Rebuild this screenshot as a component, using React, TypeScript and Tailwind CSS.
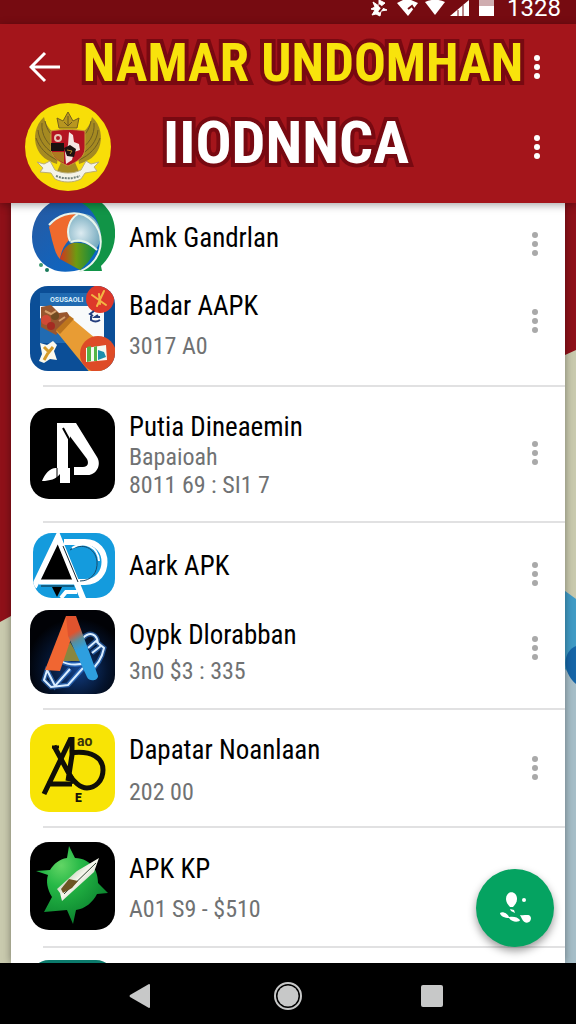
import React from "react";

interface AppItem {
  name: string;
  lines: string[];
  icon: React.ReactNode;
  row: string;
  body?: string;
  menu?: string;
  divider?: boolean;
}

const MoreButton: React.FC<{ label: string; className?: string }> = ({
  label,
  className = ""
}) => (
  <button
    type="button"
    aria-label={label}
    className={`flex w-6 shrink-0 justify-center py-2 ${className}`}
  >
    <svg viewBox="0 0 8 26" className="h-[26px] w-2" fill="currentColor">
      <circle cx="4" cy="4" r="3" />
      <circle cx="4" cy="13" r="3" />
      <circle cx="4" cy="22" r="3" />
    </svg>
  </button>
);

const Emblem = () => (
  <svg viewBox="0 0 86 90" className="h-[90px] w-[86px] shrink-0">
    <ellipse cx="43" cy="45" rx="43" ry="44" fill="#f8de08" />
    {/* wings */}
    <g>
      <path d="M19 15c-9 8-11 21-7 31 3 8 10 13 20 16l4-28c-9-3-15-9-17-19z" fill="#a58a21" />
      <path d="M17 21c-1 12 5 22 17 28M13 28c1 11 8 20 20 26M11 36c3 9 10 17 21 22M20 19c2 10 7 16 15 20" stroke="#715e20" strokeWidth="1" fill="none" />
    </g>
    <g transform="matrix(-1 0 0 1 86 0)">
      <path d="M19 15c-9 8-11 21-7 31 3 8 10 13 20 16l4-28c-9-3-15-9-17-19z" fill="#a58a21" />
      <path d="M17 21c-1 12 5 22 17 28M13 28c1 11 8 20 20 26M11 36c3 9 10 17 21 22M20 19c2 10 7 16 15 20" stroke="#715e20" strokeWidth="1" fill="none" />
    </g>
    <path d="M34 26l-2-10 6 3 5-9 5 9 6-3-2 10z" fill="#b89620" stroke="#75601c" strokeWidth="1" />
    <path d="M39 20l4 4 4-4M43 14v9" stroke="#6b571c" fill="none" />
    <path d="M37 58l-6 14h24l-6-14z" fill="#a78b22" />
    {/* shield */}
    <path d="M26 29c10-2 24-2 34 0v17c0 9-8 14-17 18-9-4-17-9-17-18z" fill="#b31422" stroke="#c69a38" strokeWidth="1" />
    <path d="M26 41h13v8H26z" fill="#19110f" />
    <path d="M27 50h12v11c-7-3-11-7-12-11z" fill="#ad7a20" />
    <circle cx="33" cy="36" r="3" fill="none" stroke="#e7c5b5" strokeWidth="2" />
    <path d="M44 30l4 3 1 7 5 2 1 6-6 2-2 8-6 4-1-12 3-7z" fill="#f5e5e2" />
    <path d="M39 46l6-3 6 4-2 8-7-1z" fill="#1d1111" />
    <path d="M42 48l5 1-2 3" stroke="#b7892a" fill="none" />
    {/* ribbon */}
    <path d="M12 60l7 2 6-3 5 9c8 4 18 4 26 0l5-9 5 3 8-2-5 5 3 4-12 2-4 6c-8 4-18 4-26 0l-4-6-11-1 3-4z" fill="#f4f3e8" stroke="#b9ad79" strokeWidth="1" />
    <path d="M31 74c8 3 16 3 24 0" stroke="#72817b" strokeWidth="2" strokeDasharray="2 1" fill="none" />
  </svg>
);

const GlobeIcon = () => (
  <svg viewBox="0 0 85 69" className="h-[69px] w-[85px] shrink-0">
    <defs>
      <linearGradient id="globeBlue" x1="0" y1="0" x2="1" y2="1">
        <stop offset="0" stopColor="#285aa1" />
        <stop offset="1" stopColor="#0668ca" />
      </linearGradient>
      <radialGradient id="globeWhite" cx="0.4" cy="0.55" r="0.6">
        <stop offset="0" stopColor="#dcebf1" />
        <stop offset="1" stopColor="#76abbf" />
      </radialGradient>
      <linearGradient id="globeFan" x1="0" y1="0.5" x2="1" y2="0.5">
        <stop offset="0" stopColor="#d5321d" />
        <stop offset="0.45" stopColor="#6d9b12" />
        <stop offset="1" stopColor="#078848" />
      </linearGradient>
    </defs>
    <path d="M45 0h27c9 8 14 19 13 34-1 14-8 23-14 29l1 5H50z" fill="#119447" />
    <path d="M20 0C8 8 2 20 2 34c0 15 8 27 20 32 7 4 21 3 31 0 11-6 18-18 18-31C70 20 64 7 52 0z" fill="url(#globeBlue)" />
    <path d="M19 24c7-9 16-14 27-13-5 6-8 14-7 26-5 5-8 12-9 19-5-5-6-13-8-19z" fill="#ef6a2d" />
    <path d="M40 18c8-11 22-9 28 3 4 8 4 17-2 25-8-7-16-8-26-6-3-9-3-16 0-22z" fill="url(#globeWhite)" />
    <path d="M30 56c3-11 9-18 19-16 7 0 12 3 17 7-4 8-9 14-16 20z" fill="url(#globeFan)" />
    <path d="M19 22c8-9 22-15 35-10 14 7 20 22 15 37-3 9-11 16-20 20M41 39c9-4 17 0 26 8M40 38c-4-9-2-21 8-27" fill="none" stroke="#e8f4ec" strokeWidth="2" />
    <circle cx="11" cy="62" r="2" fill="#3e9970" />
    <circle cx="17" cy="67" r="2" fill="#197a5a" />
  </svg>
);

const BadarIcon = () => (
  <svg viewBox="0 0 85 85" className="h-[85px] w-[85px] shrink-0">
    <defs>
      <clipPath id="badarClip">
        <rect width="85" height="85" rx="18" />
      </clipPath>
    </defs>
    <g clipPath="url(#badarClip)">
      <path d="M0 0h85v85H0z" fill="#0b4e97" />
      <path d="M10 7h64v50H10z" fill="#216bb2" />
      <path d="M10 20h64v34H49L10 32z" fill="#f8fafb" />
      <text x="20" y="16" fontSize="7" fontWeight="700" fontFamily="Roboto, sans-serif" fill="#d9eefb">OSUSAOLI</text>
      <path d="M11 21l10-2 8 8 8-1 4 6-15 17-15-8z" fill="#98562f" />
      <circle cx="16" cy="34" r="5" fill="#d14936" />
      <circle cx="25" cy="30" r="4" fill="#704b22" />
      <circle cx="21" cy="40" r="4" fill="#a42b22" />
      <path d="M15 25l6 3 5-3M29 35l6-4" stroke="#d5a06c" strokeWidth="2" fill="none" />
      <path d="M26 45l14-14 44 37-12 20H61z" fill="#e89c34" />
      <path d="M26 44l14-14 4 3-14 15z" fill="#bd751d" />
      <circle cx="70" cy="13" r="14" fill="#dd382a" />
      <path d="M62 9l14 10M74 5l-7 15M69 8l1 10" stroke="#f3b644" strokeWidth="2" strokeLinecap="round" />
      <path d="M64 25l-4 3 3 2M61 30v4c3 2 6 2 9 0M68 29l-3 2h5" stroke="#243e7e" strokeWidth="2" fill="none" />
      <circle cx="68" cy="68" r="18" fill="#de4b27" />
      <path d="M56 62l20-3 1 15-21 2z" fill="#f5faf2" />
      <path d="M57 61l4-1v15l-4 1zM64 61l3-1v15h-3z" fill="#54b545" />
      <path d="M68 64l6 2 2 5-8 3z" fill="#1b8eae" />
      <path d="M10 57l7 2 6-4 4 4-3 6 3 9-7-1-6 4-5-2 3-7z" fill="#fbf9ed" />
      <path d="M14 61l5 5 4-5M18 67l-4 7" stroke="#d49a28" strokeWidth="3" fill="none" />
    </g>
  </svg>
);

const PutiaIcon = () => (
  <svg viewBox="0 0 85 91" className="h-[91px] w-[85px] shrink-0">
    <rect width="85" height="91" rx="19" fill="#000" />
    <path d="M27 15h13v60H30V66c-4 5-10 7-18 7 3-8 9-14 15-13z" fill="#fff" />
    <path d="M34 15h12l21 34c5 8-1 18-9 18H44v-8h9c5 0 6-4 4-8L33 19z" fill="#fff" />
    <path d="M33 20l6 11v29" stroke="#000" strokeWidth="2" fill="none" />
    <path d="M27 60v12" stroke="#000" strokeWidth="1" />
  </svg>
);

const AarkIcon = () => (
  <svg viewBox="0 0 85 65" className="h-[65px] w-[85px] shrink-0">
    <defs>
      <clipPath id="aarkClip">
        <rect x="3" width="82" height="65" rx="19" />
      </clipPath>
    </defs>
    <g clipPath="url(#aarkClip)">
      <path d="M0 0h85v65H0z" fill="#149bdd" />
      <path d="M34 9h21c26 0 26 40 0 40h-9" fill="none" stroke="#fff" strokeWidth="6" />
      <path d="M40 17c13-8 25-2 27 11 1 12-6 20-17 20" fill="none" stroke="#17496b" strokeWidth="1" />
      <path d="M42 15c13-8 26-1 27 13" fill="none" stroke="#fff" strokeWidth="2" />
      <path d="M27 8l20 42H9z" fill="#000" />
      <path d="M4 54L28 4l26 64" fill="none" stroke="#fff" strokeWidth="6" />
      <path d="M9 49h35" stroke="#fff" strokeWidth="5" />
      <path d="M11 53h33M33 13l15 36" stroke="#102632" strokeWidth="1" />
      <path d="M22 54h10l-5 10z" fill="#000" />
      <path d="M31 65l5-6h11" stroke="#fff" strokeWidth="4" fill="none" />
    </g>
  </svg>
);

const OypkIcon = () => (
  <svg viewBox="0 0 85 84" className="h-[84px] w-[85px] shrink-0">
    <defs>
      <radialGradient id="oypkBg" cx="0.55" cy="0.7" r="0.6">
        <stop offset="0" stopColor="#123f86" />
        <stop offset="0.6" stopColor="#04142f" />
        <stop offset="1" stopColor="#010206" />
      </radialGradient>
      <linearGradient id="oypkLeg" x1="0" y1="0" x2="0.3" y2="1">
        <stop offset="0.3" stopColor="#e0532e" />
        <stop offset="0.45" stopColor="#578f9e" />
        <stop offset="0.6" stopColor="#2e9fdf" />
      </linearGradient>
    </defs>
    <rect width="85" height="84" rx="19" fill="url(#oypkBg)" />
    <path d="M53 28c7-7 14-4 15 5l6 5c-2 10-7 18-15 24M58 38l8-7 5 5-9 7M18 57l-4 13 7 7 17-2 15-17M17 60l8 16 15-17M31 51c8 5 20 4 29 1" fill="none" stroke="#3c8cf0" strokeWidth="5" opacity="0.5" />
    <path d="M53 28c7-7 14-4 15 5l6 5c-2 10-7 18-15 24M58 38l8-7 5 5-9 7M18 57l-4 13 7 7 17-2 15-17M17 60l8 16 15-17M31 51c8 5 20 4 29 1" fill="none" stroke="#d9edff" strokeWidth="2" />
    <path d="M40 32l11 19H30z" fill="#89863f" />
    <path d="M36 6h9l-2 17-13 38-15-1z" fill="#f06632" />
    <path d="M36 6h10l22 60c0 5-9 6-11 1L38 26z" fill="url(#oypkLeg)" />
  </svg>
);

const DapatarIcon = () => (
  <svg viewBox="0 0 85 88" className="h-[88px] w-[85px] shrink-0">
    <rect width="85" height="88" rx="19" fill="#f8e405" />
    <g fill="none" stroke="#100f07">
      <path d="M41 14L14 70M17 60h25" strokeWidth="5" />
      <path d="M42 13v18l-4 26M24 22l20 37" strokeWidth="5" />
      <path d="M40 29c22-3 33 5 33 17 0 11-8 18-16 18-7 0-14-7-18-14" strokeWidth="5" />
      <path d="M22 23h7" strokeWidth="3" />
    </g>
    <text x="47" y="22" fontSize="14" fontWeight="700" fontFamily="Roboto, sans-serif" fill="#39340b">ao</text>
    <text x="45" y="78" fontSize="12" fontWeight="900" fontFamily="Roboto, sans-serif" fill="#171607">E</text>
  </svg>
);

const BallIcon = () => (
  <svg viewBox="0 0 85 88" className="h-[88px] w-[85px] shrink-0">
    <defs>
      <radialGradient id="ballGreen" cx="0.35" cy="0.25" r="0.8">
        <stop offset="0" stopColor="#62d565" />
        <stop offset="0.35" stopColor="#25b846" />
        <stop offset="1" stopColor="#087d2b" />
      </radialGradient>
      <linearGradient id="blade" x1="0" y1="0" x2="1" y2="1">
        <stop offset="0" stopColor="#73966f" />
        <stop offset="0.5" stopColor="#f7f8ed" />
        <stop offset="1" stopColor="#899488" />
      </linearGradient>
    </defs>
    <rect width="85" height="88" rx="19" fill="#000" />
    <path d="M37 16l2-12 6 12c8 0 15 4 19 10 3 4 4 11 4 15l10 10-11 1c-4 8-12 15-21 16l-3 14-6-14-23 2 8-15c-5-8-6-16-4-22L6 29l14-1c4-6 9-11 17-12z" fill="url(#ballGreen)" />
    <path d="M69 16l-5 14-32 29-2-8-3-4 20-18z" fill="url(#blade)" />
    <path d="M66 21L34 52" stroke="#304432" strokeWidth="1" />
    <path d="M31 47l8-10 9 2-6 7-9 5z" fill="#6c5423" />
  </svg>
);

const TealIcon = () => (
  <svg viewBox="0 0 85 86" className="h-[86px] w-[85px] shrink-0">
    <rect width="85" height="86" rx="19" fill="#0b7a6b" />
  </svg>
);

const apps: AppItem[] = [
  { name: "Amk Gandrlan", lines: [], icon: <GlobeIcon />, row: "pb-2", menu: "mt-3" },
  {
    name: "Badar AAPK",
    lines: ["3017 A0"],
    icon: <BadarIcon />,
    row: "pt-1.5 pb-3.5",
    body: "gap-2.5 pb-2",
    menu: "mb-4",
    divider: true
  },
  {
    name: "Putia Dineaemin",
    lines: ["Bapaioah", "8011 69 : SI1 7"],
    icon: <PutiaIcon />,
    row: "pt-5 pb-5.5",
    body: "pt-1",
    divider: true
  },
  { name: "Aark APK", lines: [], icon: <AarkIcon />, row: "pt-2.5 pb-1.5", menu: "mt-4" },
  {
    name: "Oypk Dlorabban",
    lines: ["3n0 $3 : 335"],
    icon: <OypkIcon />,
    row: "pt-1.5 pb-3.5",
    body: "gap-1.5",
    menu: "mb-2",
    divider: true
  },
  {
    name: "Dapatar Noanlaan",
    lines: ["202 00"],
    icon: <DapatarIcon />,
    row: "pt-3.5 pb-3.5",
    body: "gap-3 pt-1",
    divider: true
  },
  {
    name: "APK KP",
    lines: ["A01 S9 - $510"],
    icon: <BallIcon />,
    row: "pt-3.5 pb-4",
    body: "gap-2.5 pt-1",
    divider: true
  },
  { name: "", lines: [], icon: <TealIcon />, row: "pt-3" }
];

const AppRow: React.FC<{ item: AppItem }> = ({ item }) => (
  <li>
    <div className={`flex items-center pr-[18px] pl-[19px] ${item.row}`}>
      {item.icon}
      <div className={`ml-3.5 flex min-w-0 flex-1 flex-col ${item.body ?? ""}`}>
        {item.name && (
          <h2 className="truncate text-[27px] leading-8 text-black">{item.name}</h2>
        )}
        {item.lines.map((line) => (
          <p key={line} className="truncate text-[24px] leading-7 text-[#707273]">
            {line}
          </p>
        ))}
      </div>
      {item.name && item.name !== "APK KP" && (
        <MoreButton
          label={`More options for ${item.name}`}
          className={`text-[#a9a9a9] ${item.menu ?? ""}`}
        />
      )}
    </div>
    {item.divider && <div className="ml-8 h-0.5 bg-[#e1e1e2]" />}
  </li>
);

const StatusBar = () => (
  <div className="flex h-6 shrink-0 items-end justify-end bg-[#760b11] pr-[15px] pb-1 text-white">
    <svg viewBox="0 0 124 20" className="mr-3 h-5 w-[124px]" fill="#fff">
      <path d="M2 2l6 4V0l6 3-5 4 7 3-6 1-1 5-4-2-4 1 3-5-4-1 4-2z" stroke="#fff" strokeWidth="1" />
      <path d="M8 5l3 3-3 4" stroke="#760b11" strokeWidth="2" fill="none" />
      <path d="M26 3l6-3h8l7 3-10 13z" />
      <path d="M37 9l4-3 2 3" stroke="#760b11" strokeWidth="2" fill="none" />
      <path d="M54 2c6-3 14-3 20 0L64 15z" />
      <path d="M98 0v16H79z" />
      <path d="M87 16v-6M92 16V5" stroke="#760b11" strokeWidth="1" />
      <path d="M108 0h15v7h-15z" fill="#cfadb0" />
      <path d="M108 6h15v10h-15z" />
    </svg>
    <span className="font-[Roboto,sans-serif] text-[24px] leading-6">1328</span>
  </div>
);

const Header = () => (
  <header className="relative z-10 flex h-[179px] shrink-0 flex-col bg-[#a4151b] pr-[27px] pl-[25px] shadow-[0_2px_8px_rgba(0,0,0,0.35)]">
    <div className="flex h-[86px] shrink-0 items-center">
      <button type="button" aria-label="Back" className="flex w-10 shrink-0 justify-center text-white">
        <svg viewBox="0 0 32 32" className="h-8 w-8" fill="none" stroke="#fff" strokeWidth="3">
          <path d="M31 16H3M16 2L2 16l14 14" />
        </svg>
      </button>
      <h1 className="flex-1 pb-2 pl-4 text-center text-[53px] leading-none font-bold whitespace-nowrap text-[#f8e30c] [-webkit-text-stroke:8px_#780911] [paint-order:stroke_fill]">
        NAMAR UNDOMHAN
      </h1>
      <MoreButton label="More options" className="text-white" />
    </div>
    <div className="flex h-[74px] shrink-0 items-center">
      <Emblem />
      <p className="flex-1 pr-16 pb-2 text-center text-[60px] leading-none font-bold whitespace-nowrap text-white [-webkit-text-stroke:8px_#780911] [paint-order:stroke_fill]">
        IIODNNCA
      </p>
      <MoreButton label="Account options" className="text-white" />
    </div>
  </header>
);

const Backdrop = () => (
  <svg
    viewBox="0 0 576 760"
    preserveAspectRatio="none"
    className="absolute inset-0 h-full w-full"
    aria-hidden="true"
  >
    <path d="M0 0h576v760H0z" fill="#8f1119" />
    <path d="M0 419l11-6 554-261 11-5v613H0z" fill="#c9caae" />
    <path d="M565 388l11 8v364h-11z" fill="#a6bec8" />
    <path d="M565 388l11 8v80l-11-10z" fill="#409bc5" />
    <path d="M576 443c-14 6-14 26 0 38z" fill="#1666a8" />
  </svg>
);

export default function App() {
  return (
    <div className="flex h-screen flex-col overflow-hidden bg-[#8f1119] font-['Roboto_Condensed','Liberation_Sans_Narrow',Roboto,sans-serif]">
      <StatusBar />
      <Header />
      <main className="relative min-h-0 flex-1 overflow-hidden">
        <Backdrop />
        <ul className="relative mx-[11px] h-full overflow-hidden bg-white shadow-[0_0_8px_rgba(0,0,0,0.4)]">
          {apps.map((item, index) => (
            <AppRow key={index} item={item} />
          ))}
        </ul>
        <button
          type="button"
          aria-label="New contact"
          className="absolute right-[22px] bottom-4 flex size-[78px] items-center justify-center rounded-full bg-[#05a361] shadow-[0_4px_8px_rgba(0,0,0,0.4)]"
        >
          <svg viewBox="0 0 34 34" className="size-[34px]" fill="#fff">
            <path d="M8 8c0-9 11-9 11 0 0 3-2 6-4 8h-3c-2-2-4-5-4-8z" />
            <ellipse cx="26" cy="9" rx="2" ry="2" />
            <path d="M12 18l4 1 1 3-4-2z" />
            <path d="M2 22c3-2 8 1 9 4 4-1 9 0 11 3 0 2-8 3-11-2-4 0-9-2-9-5z" />
            <path d="M22 24c5 1 10-2 11 3 0 6-7 6-9 1z" />
          </svg>
        </button>
      </main>
      <nav className="relative z-10 grid h-[61px] shrink-0 grid-cols-[1fr_144px_144px_144px_1fr] items-center justify-items-center bg-black pt-1">
        <button type="button" aria-label="Back" className="col-start-2 mr-2">
          <svg viewBox="0 0 22 26" className="h-[26px] w-[22px]" fill="#c7c8c8">
            <path d="M1 12L20 1q1 0 1 1v22q0 1-1 1L1 14q-1-1 0-2z" />
          </svg>
        </button>
        <button type="button" aria-label="Home">
          <svg viewBox="0 0 28 28" className="size-7">
            <circle cx="14" cy="14" r="13" fill="none" stroke="#c7c8c8" strokeWidth="2" />
            <circle cx="14" cy="14" r="10.5" fill="#c7c8c8" />
          </svg>
        </button>
        <button type="button" aria-label="Recent apps" className="size-[22px] rounded-xs bg-[#c7c8c8]" />
      </nav>
    </div>
  );
}
